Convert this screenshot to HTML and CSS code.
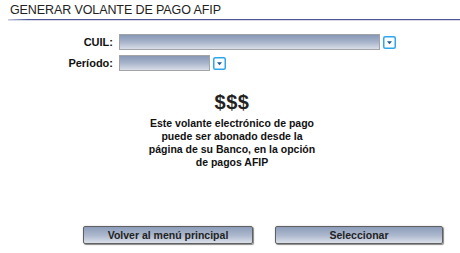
FILE: index.html
```html
<!DOCTYPE html>
<html>
<head>
<meta charset="utf-8">
<link rel="stylesheet" href="styles.css">
</head>
<body>
<div class="page">
  <div class="header">
    <div class="title">GENERAR VOLANTE DE PAGO AFIP</div>
    <div class="rule"></div>
  </div>
  <div class="form">
    <div class="row">
      <div class="label">CUIL:</div>
      <div class="field wide"></div>
      <div class="dd"><svg width="13" height="13" viewBox="0 0 13 13"><rect x="0.75" y="0.75" width="11.5" height="11.5" rx="1.5" fill="#fff" stroke="#2ea6ee" stroke-width="1.5"/><path d="M4 5.2 L9 5.2 L6.5 8.2 Z" fill="#1d5a98"/></svg></div>
    </div>
    <div class="row">
      <div class="label">Período:</div>
      <div class="field narrow"></div>
      <div class="dd"><svg width="13" height="13" viewBox="0 0 13 13"><rect x="0.75" y="0.75" width="11.5" height="11.5" rx="1.5" fill="#fff" stroke="#2ea6ee" stroke-width="1.5"/><path d="M4 5.2 L9 5.2 L6.5 8.2 Z" fill="#1d5a98"/></svg></div>
    </div>
  </div>
  <div class="info">
    <div class="money">$$$</div>
    <div class="text">Este volante electrónico de pago<br>puede ser abonado desde la<br>página de su Banco, en la opción<br>de pagos AFIP</div>
  </div>
  <div class="buttons">
    <div class="btn left">Volver al menú principal</div>
    <div class="btn right">Seleccionar</div>
  </div>
</div>
</body>
</html>
```
FILE: styles.css
```css
html, body {
  margin: 0;
  padding: 0;
  background: #fff;
}
.page {
  width: 460px;
  height: 253px;
  position: relative;
  font-family: "Liberation Sans", Arial, sans-serif;
  color: #000;
}
.header {
  padding: 3px 0 0 10px;
}
.title {
  font-size: 12.5px;
  line-height: 14px;
  color: #222;
  letter-spacing: -0.1px;
}
.rule {
  margin-top: 2px;
  margin-left: -2px;
  height: 1px;
  background: linear-gradient(to right, #c8cbe0 0, #4b5597 20px, #4b5597 100%);
  border-bottom: 1px solid #d8dbe8;
}
.form {
  margin-top: 13px;
  display: flex;
  flex-direction: column;
  gap: 5px;
}
.row {
  display: flex;
  align-items: center;
  height: 16px;
}
.label {
  width: 113px;
  text-align: right;
  font-size: 11px;
  font-weight: bold;
  color: #111;
  padding-right: 6px;
}
.field {
  height: 14px;
  border: 1px solid #a2a4a8;
  background: linear-gradient(to bottom, #8798b6 0%, #a7b4ca 50%, #d9dee8 100%);
}
.wide { width: 259px; }
.narrow { width: 89px; }
.dd {
  width: 13px;
  height: 13px;
  margin-left: 3px;
  display: flex;
}
.info {
  margin-top: 21px;
  text-align: center;
  padding-left: 4px;
  font-weight: bold;
}
.money {
  font-size: 20px;
  line-height: 20px;
  color: #222;
  letter-spacing: 0.5px;
}
.text {
  margin-top: 5px;
  font-size: 10.5px;
  line-height: 13px;
  color: #111;
}
.buttons {
  position: absolute;
  left: 83px;
  top: 226px;
  display: flex;
  gap: 22px;
}
.btn {
  width: 168px;
  height: 16px;
  border: 1px solid #606060;
  border-radius: 2px;
  box-shadow: 1px 1px 1px #8a8a8a, 0 0 2px #cfcfcf;
  background: linear-gradient(to bottom, #8d9dba 0%, #aab6cc 50%, #dbe0ea 100%);
  font-size: 10.5px;
  font-weight: bold;
  line-height: 16px;
  text-align: center;
  color: #222;
}
.right { width: 166px; }
```
